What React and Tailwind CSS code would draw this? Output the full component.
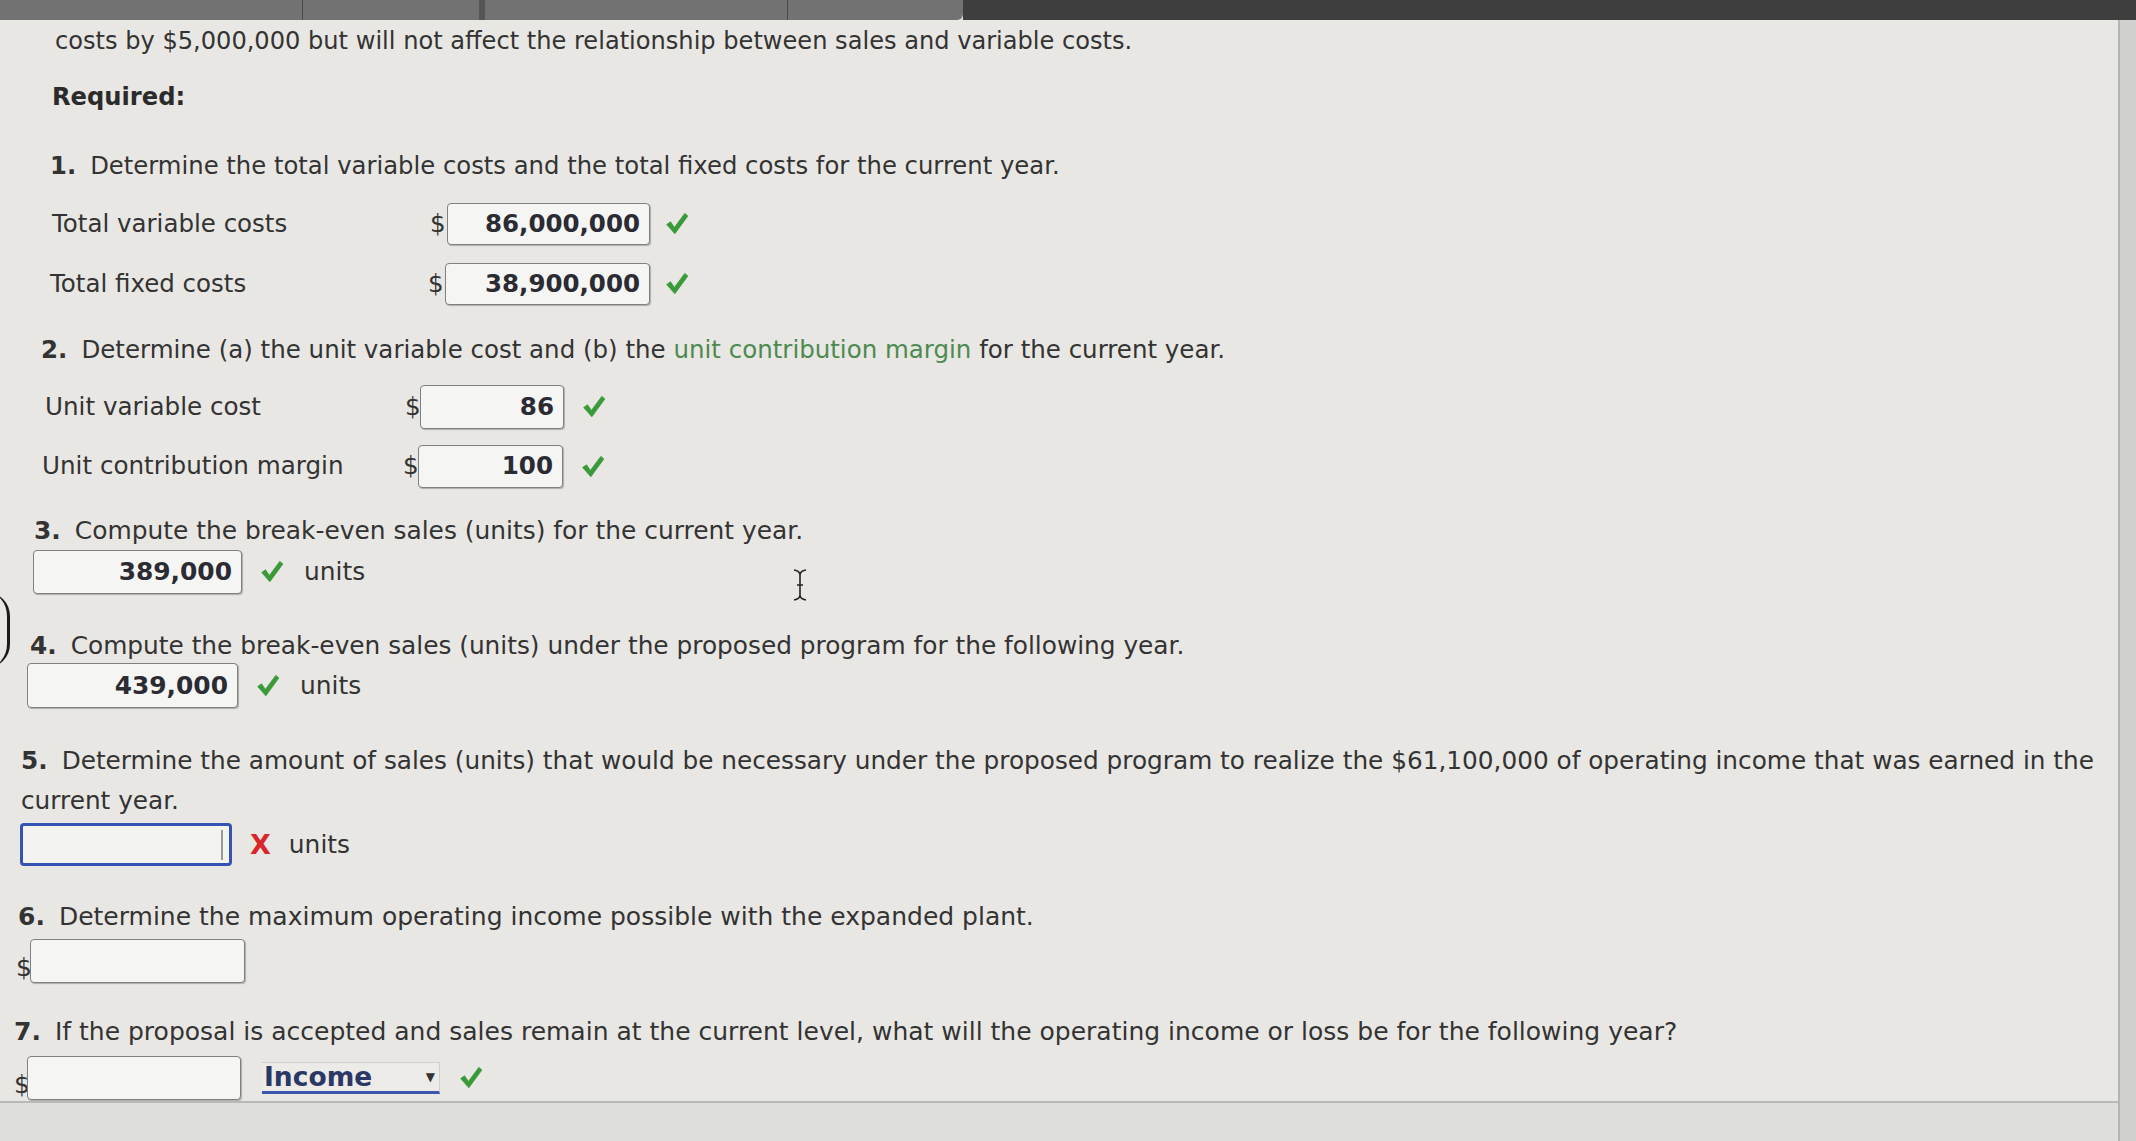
import React from "react";

const F = { fontFamily: '"DejaVu Sans", Verdana, sans-serif' };

function Check({ className = "" }) {
  return (
    <svg width="26" height="26" viewBox="0 0 24 24" className={className}>
      <path d="M2.5 12.5 L6 10 L9.6 15.2 L19.2 2.2 L22 4.6 L10 21 Z" fill="#3a9a3a" stroke="#3a9a3a" strokeWidth="0.8" strokeLinejoin="round" />
    </svg>
  );
}

function Box({ value = "", w, h = "h-[42px]", className = "" }) {
  return (
    <div
      className={`${w} ${h} ${className} flex items-center justify-end pr-[9px] bg-[#f5f5f3] border border-[#808080] rounded-[4px] shadow-[1px_1px_1px_rgba(0,0,0,0.25)] font-bold text-[#2b2b33]`}
    >
      {value}
    </div>
  );
}

function Q({ n, children, className = "" }) {
  return (
    <div className={`h-[28px] leading-[28px] whitespace-nowrap ${className}`}>
      <span className="font-bold mr-[14px]">{n}.</span>
      {children}
    </div>
  );
}

export default function App() {
  return (
    <div style={F} className="w-[2136px] h-[1141px] bg-[#dcdcda] relative overflow-hidden flex flex-col text-[24px] text-[#333333]">
      {/* top bar */}
      <div className="h-[20px] flex shrink-0">
        <div className="w-[963px] flex bg-[#727272] rounded-br-[6px]">
          <div className="w-[303px] border-r border-[#4a4a4a]" />
          <div className="w-[182px] border-r-[6px] border-[#555]" />
          <div className="w-[303px] border-r border-[#4a4a4a]" />
          <div className="flex-1" />
        </div>
        <div className="flex-1 bg-[#3e3e3e]" />
      </div>

      <div className="flex flex-1 min-h-0">
        <div className="flex-1 flex flex-col">
          <div className="h-[1083px] bg-[#e8e7e3] relative flex flex-col border-b-2 border-[#b9b9b7]">
            <div className="ml-[55px] mt-[7px] h-[28px] leading-[28px] whitespace-nowrap text-[24.1px]">
              costs by $5,000,000 but will not affect the relationship between sales and variable costs.
            </div>
            <div className="ml-[52px] mt-[28px] h-[28px] leading-[28px] font-bold text-[#2b2b2b] text-[24.2px]">Required:</div>

            <Q n="1" className="ml-[50px] mt-[41px] text-[24.3px]">
              Determine the total variable costs and the total fixed costs for the current year.
            </Q>

            <div className="ml-[52px] mt-[23px] flex items-center h-[42px] text-[24.5px]">
              <div className="w-[378px]">Total variable costs</div>
              <span className="w-[17px]">$</span>
              <Box value="86,000,000" w="w-[203px]" />
              <Check className="ml-[14px]" />
            </div>
            <div className="ml-[50px] mt-[18px] flex items-center h-[42px] text-[24.5px]">
              <div className="w-[378px]">Total fixed costs</div>
              <span className="w-[17px]">$</span>
              <Box value="38,900,000" w="w-[205px]" />
              <Check className="ml-[14px]" />
            </div>

            <Q n="2" className="ml-[41px] mt-[31px] text-[24.5px]">
              Determine (a) the unit variable cost and (b) the{" "}
              <span className="text-[#4d8a52]">unit contribution margin</span> for the current year.
            </Q>

            <div className="ml-[45px] mt-[21px] flex items-center h-[44px] text-[24.6px]">
              <div className="w-[360px]">Unit variable cost</div>
              <span className="w-[15px]">$</span>
              <Box value="86" w="w-[144px]" h="h-[44px]" />
              <Check className="ml-[17px]" />
            </div>
            <div className="ml-[42px] mt-[16px] flex items-center h-[43px] text-[24.6px]">
              <div className="w-[361px]">Unit contribution margin</div>
              <span className="w-[15px]">$</span>
              <Box value="100" w="w-[145px]" h="h-[43px]" />
              <Check className="ml-[17px]" />
            </div>

            <Q n="3" className="ml-[34px] mt-[29px] text-[24.9px]">
              Compute the break-even sales (units) for the current year.
            </Q>
            <div className="ml-[33px] mt-[5px] flex items-center h-[44px] text-[24.9px]">
              <Box value="389,000" w="w-[209px]" h="h-[44px]" />
              <Check className="ml-[17px]" />
              <span className="ml-[19px]">units</span>
            </div>

            <Q n="4" className="ml-[30px] mt-[38px] text-[24.8px]">
              Compute the break-even sales (units) under the proposed program for the following year.
            </Q>
            <div className="ml-[27px] mt-[3px] flex items-center h-[45px] text-[24.9px]">
              <Box value="439,000" w="w-[211px]" h="h-[45px]" />
              <Check className="ml-[17px]" />
              <span className="ml-[19px]">units</span>
            </div>

            <div className="ml-[21px] mt-[33px] leading-[40px] whitespace-nowrap text-[24.75px]">
              <span className="font-bold mr-[14px]">5.</span>
              Determine the amount of sales (units) that would be necessary under the proposed program to realize the $61,100,000 of operating income that was earned in the
              <br />
              current year.
            </div>
            <div className="ml-[20px] mt-[2px] flex items-center h-[43px] text-[24.9px]">
              <div className="w-[212px] h-[43px] bg-[#f3f3f1] border-[3px] border-[#3553b2] rounded-[4px] flex justify-end items-center pr-[6px]">
                <div className="w-[2px] h-[30px] bg-[#9a9a9a]" />
              </div>
              <span className="ml-[18px] text-[#d8262a] text-[27px] font-bold leading-none">X</span>
              <span className="ml-[18px]">units</span>
            </div>

            <Q n="6" className="ml-[18px] mt-[37px] text-[25px]">
              Determine the maximum operating income possible with the expanded plant.
            </Q>
            <div className="ml-[16px] mt-[8px] flex items-end h-[44px] text-[25px]">
              <span className="w-[14px] leading-[30px]">$</span>
              <Box w="w-[215px]" h="h-[44px]" />
            </div>

            <Q n="7" className="ml-[14px] mt-[35px] text-[25px]">
              If the proposal is accepted and sales remain at the current level, what will the operating income or loss be for the following year?
            </Q>
            <div className="ml-[14px] mt-[10px] flex items-center h-[44px] text-[25px]">
              <span className="w-[13px] self-end leading-[30px]">$</span>
              <Box w="w-[214px]" h="h-[44px]" />
              <div className="ml-[21px] w-[178px] h-[32px] flex items-center justify-between border-t border-r border-[#cfcfcf] border-b-[3px] border-b-[#3b57ad] pl-[2px] pr-[4px] bg-[#ecebe7]">
                <span className="font-bold text-[#2b3766] text-[26.5px] leading-none">Income</span>
                <span className="text-[12px] text-[#333]">▼</span>
              </div>
              <Check className="ml-[18px]" />
            </div>

            {/* left edge arc */}
            <div className="absolute left-[-14px] top-[572px] w-[24px] h-[76px] border-r-[3px] border-[#1a1a1a] rounded-r-full" />
            {/* I-beam cursor */}
            <svg className="absolute left-[791px] top-[548px]" width="18" height="34" viewBox="0 0 18 34">
              <path d="M3 2 Q9 3 9 7 L9 27 Q9 31 3 32 M15 2 Q9 3 9 7 M9 27 Q9 31 15 32 M6 17 L12 17" fill="none" stroke="#222" strokeWidth="1.6" />
            </svg>
          </div>
          <div className="flex-1 bg-[#dededc]" />
        </div>
        <div className="w-[18px] bg-[#d0d0ce] border-l-2 border-[#b4b4b2]" />
      </div>
    </div>
  );
}
